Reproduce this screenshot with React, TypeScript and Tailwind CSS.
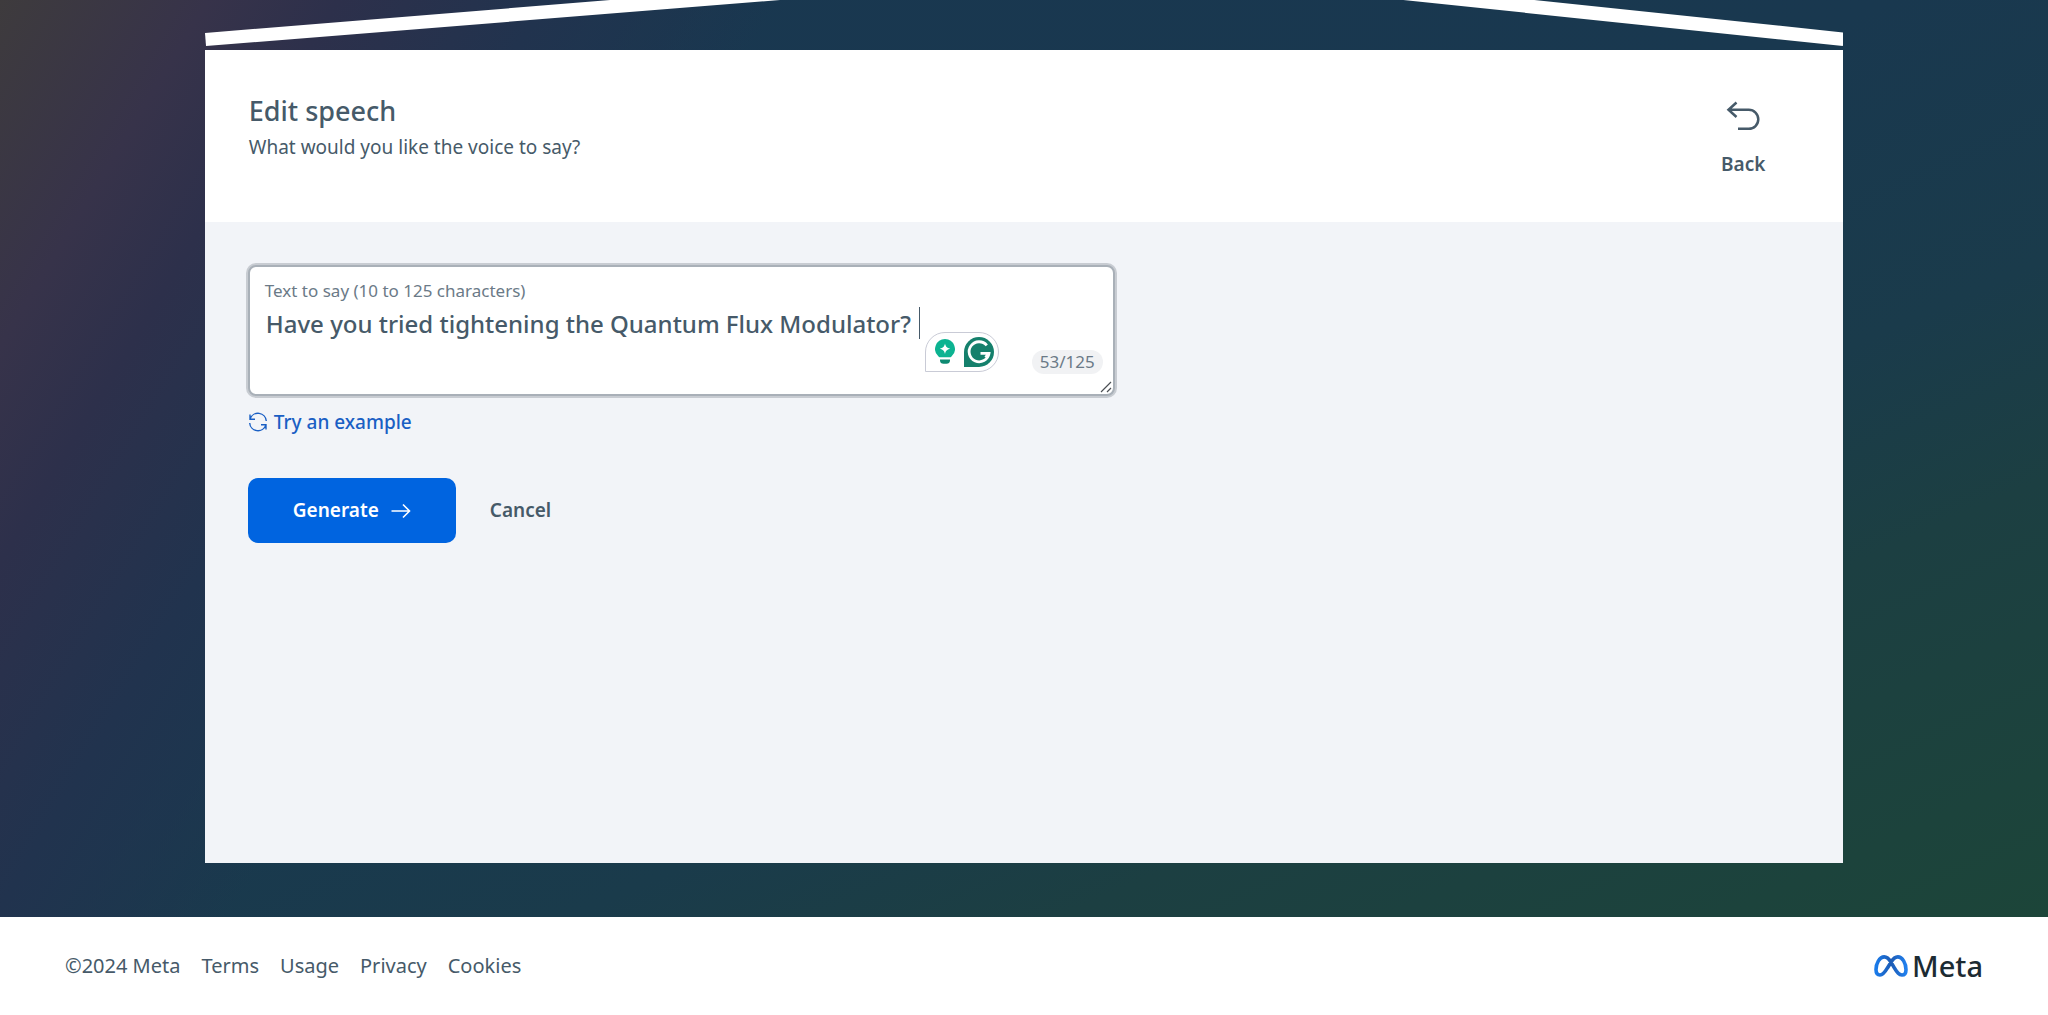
import { useState } from "react";

const links = ["Terms", "Usage", "Privacy", "Cookies"];

function RoofBars() {
  return (
    <svg viewBox="0 0 1638 50" preserveAspectRatio="none" className="block h-[50px] w-full" fill="#fff" aria-hidden="true">
      <path d="M0 33 405 0H575L1 46Z" />
      <path d="M1329 0 1638.500 32.500 1637.500 46 1198 0Z" />
    </svg>
  );
}

function BackIcon() {
  return (
    <svg viewBox="0 0 36 32" className="h-8 w-9" fill="none" stroke="currentColor" strokeWidth="2.500" aria-hidden="true">
      <path d="M11.500 2.500 3.500 9.800l8 7.200M3.500 9.800h20.300a9.500 9.500 0 0 1 0 19H13" />
    </svg>
  );
}

function RefreshIcon() {
  return (
    <svg viewBox="0 0 20 20" className="h-5 w-5" fill="none" stroke="currentColor" strokeWidth="1.400" aria-hidden="true">
      <path d="M2 2.500v4.700h5M2.200 6.800A8.300 8.300 0 0 1 18.300 9M18 17.500v-4.700h-5M17.800 13.200A8.300 8.300 0 0 1 1.700 11" />
    </svg>
  );
}

function ArrowIcon() {
  return (
    <svg viewBox="0 0 20 16" className="h-4 w-5" fill="none" stroke="currentColor" strokeWidth="1.600" aria-hidden="true">
      <path d="M.500 8h18M12 1.500 18.500 8 12 14.500" />
    </svg>
  );
}

function BulbIcon() {
  return (
    <svg viewBox="0 0 20 26" className="h-[26px] w-5" aria-hidden="true">
      <path fill="#0cb391" d="M10 0a10 10 0 0 1 6.500 17.500l-1 .8h-11l-1-.8A10 10 0 0 1 10 0Z" />
      <path fill="#fff" d="M10 4.500c.9 3.400 1.800 4.300 5.200 5.200-3.400.9-4.300 1.800-5.200 5.200-.9-3.400-1.800-4.300-5.200-5.200 3.400-.9 4.300-1.800 5.200-5.200Z" />
      <path fill="#0e8a72" d="M5 20.500h10v1a3.500 3.500 0 0 1-3.500 3.200h-3A3.500 3.500 0 0 1 5 21.500Z" />
    </svg>
  );
}

function GIcon() {
  return (
    <svg viewBox="0 0 30 30" className="h-[30px] w-[30px]" fill="none" aria-hidden="true">
      <path fill="#15806c" d="M15 0a15 15 0 0 1 0 30H0V15A15 15 0 0 1 15 0Z" />
      <path stroke="#fff" strokeWidth="2.800" d="M22.800 8.300A10 10 0 1 0 25 16.400H16.500M21.500 20.300l3.300-3.900" />
    </svg>
  );
}

function MetaMark() {
  return (
    <svg viewBox="0 0 34 22" className="h-[22px] w-[34px]" fill="none" aria-hidden="true">
      <defs>
        <linearGradient id="mark" x1="0" x2="1" y1="0" y2="0">
          <stop offset="0" stopColor="#1a7bea" />
          <stop offset=".5" stopColor="#1d5bb4" />
          <stop offset="1" stopColor="#2180ee" />
        </linearGradient>
      </defs>
      <path
        stroke="url(#mark)"
        strokeWidth="3.600"
        d="M17 7.200C14.800 3.600 12.700 1.900 10.200 1.900 5.600 1.900 2 8.300 2 14.600c0 3.400 1.500 5.400 4 5.400 3 0 4.900-2.700 7.600-7.300L17 7.200c2-3.300 4.200-5.300 6.900-5.300C28.400 1.900 32 8.200 32 14.700c0 3.300-1.500 5.300-4 5.300-2.900 0-4.600-2-7.800-7.400Z"
      />
    </svg>
  );
}

function ResizeGrip() {
  return (
    <svg viewBox="0 0 12 12" className="pointer-events-none absolute right-[3px] bottom-[3px] h-3 w-3" stroke="#4b4f54" strokeWidth="1.200" aria-hidden="true">
      <path d="M1 11 11 1M7 11l4-4" />
    </svg>
  );
}

export default function App() {
  const [text, setText] = useState("Have you tried tightening the Quantum Flux Modulator?");
  return (
    <div className="flex min-h-screen flex-col bg-white font-['Noto_Sans',sans-serif] text-[#465a69]">
      <main className="flex grow flex-col bg-[linear-gradient(121deg,#3e3b3d_0%,#37334a_8%,#2d304b_13%,#21334e_21%,#19365000_30%),linear-gradient(156deg,#193750_0%,#19384f_46%,#1a3b4b_64%,#1c3f42_76%,#1c4539_100%)] pb-[54px]">
        <div className="mx-auto flex w-4/5 grow flex-col">
          <RoofBars />
          <header className="flex h-[172px] items-start justify-between bg-white pt-[43px] pr-[73px] pl-11">
            <div>
              <h1 className="text-[27px] leading-9 font-medium">Edit speech</h1>
              <p className="text-[19px] leading-9">What would you like the voice to say?</p>
            </div>
            <button type="button" className="flex w-[54px] flex-col items-center gap-5 pt-[7px] text-[19px] leading-6 font-semibold">
              <BackIcon />
              Back
            </button>
          </header>
          <section className="grow bg-[#f2f4f8] px-[43px] pt-[43px]">
            <div className="relative w-full max-w-[867px]">
              <label htmlFor="speech" className="absolute top-[14px] left-[17px] text-[17px] leading-6 text-[#6b7a87]">
                Text to say (10 to 125 characters)
              </label>
              <textarea
                id="speech"
                value={text}
                onChange={(e) => setText(e.target.value)}
                maxLength={125}
                className="block h-[131px] w-full resize-none rounded-lg border-2 border-[#a9b0b8] bg-white pt-[39px] pr-4 pl-4 text-[24px] leading-9 font-medium ring-2 ring-[#c8ccd2] outline-none"
              />
              <span className="absolute top-[42px] left-[671px] h-8 w-px bg-[#465a69]" />
              <span className="absolute top-[67px] left-[677px] flex h-10 w-[74px] items-center gap-[9px] rounded-[20px] rounded-bl-none border border-[#c9cbd6] bg-white pl-[9px]">
                <BulbIcon />
                <GIcon />
              </span>
              <span className="absolute right-3 bottom-[22px] rounded-full bg-[#f1f2f4] px-2 text-[17px] leading-6 text-[#6b7a87]">{text.length}/125</span>
              <ResizeGrip />
            </div>
            <button type="button" className="mt-[10px] flex items-center gap-[6px] text-[19px] leading-8 font-medium text-[#1a5fc4]">
              <RefreshIcon />
              Try an example
            </button>
            <div className="mt-10 flex items-center gap-[34px] text-[19px] font-semibold">
              <button type="button" className="flex h-[65px] w-[208px] items-center justify-center gap-3 rounded-[10px] bg-[#0064e0] text-white">
                Generate
                <ArrowIcon />
              </button>
              <button type="button">Cancel</button>
            </div>
          </section>
        </div>
      </main>
      <footer className="flex h-[98px] items-center justify-between px-[65px] text-[20px]">
        <nav className="flex gap-[21px]">
          <span>©2024 Meta</span>
          {links.map((l) => (
            <a key={l} href="#">{l}</a>
          ))}
        </nav>
        <a href="#" className="flex items-center gap-1 text-[29px] leading-8 font-medium text-[#1c2b33]">
          <MetaMark />
          Meta
        </a>
      </footer>
    </div>
  );
}
